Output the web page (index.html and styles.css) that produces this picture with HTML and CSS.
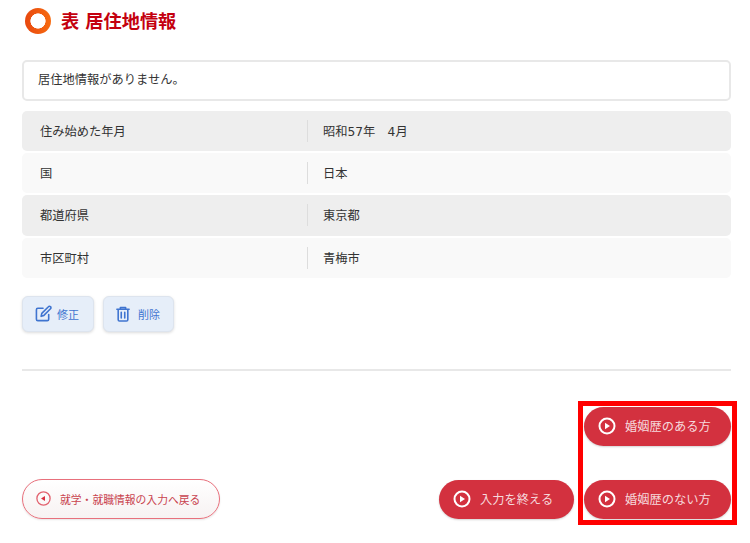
FILE: index.html
```html
<!DOCTYPE html>
<html lang="ja">
<head>
<meta charset="utf-8">
<title>居住地情報</title>
<link rel="stylesheet" href="styles.css">
</head>
<body>
<main class="page">
  <h1 class="title"><span class="ring"></span><span class="title-text">表 居住地情報</span></h1>
  <div class="notice">居住地情報がありません。</div>
  <div class="table">
    <div class="row dark"><div class="key">住み始めた年月</div><div class="val">昭和57年&emsp;4月</div></div>
    <div class="row light"><div class="key">国</div><div class="val">日本</div></div>
    <div class="row dark"><div class="key">都道府県</div><div class="val">東京都</div></div>
    <div class="row light"><div class="key">市区町村</div><div class="val">青梅市</div></div>
  </div>
  <div class="tools">
    <button class="tool edit"><svg width="17" height="17" viewBox="0 0 18 18" fill="none" stroke="#3f74d0" stroke-width="1.7" stroke-linecap="round" stroke-linejoin="round"><path d="M8.5 3.5H3a1.5 1.5 0 0 0-1.5 1.5v10A1.5 1.5 0 0 0 3 16.500h10a1.500 1.500 0 0 0 1.500-1.500V10"/><path d="M6.500 12l.7-3.200 7-7a1.500 1.500 0 0 1 2.200 0 1.500 1.500 0 0 1 0 2.200l-7 7z"/></svg>修正</button>
    <button class="tool del"><svg width="14" height="16" viewBox="0 0 16 18" fill="none" stroke="#3f74d0" stroke-width="1.8" stroke-linecap="round" stroke-linejoin="round"><path d="M1 3.500h14M5 3.500V1.500h6v2M2.500 3.500v12a1.500 1.500 0 0 0 1.500 1.500h8a1.500 1.500 0 0 0 1.500-1.500v-12M6 7v6.500M10 7v6.500"/></svg>削除</button>
  </div>
  <hr class="rule">
  <div class="nav">
    <button class="back"><svg width="15" height="15" viewBox="0 0 15 15"><circle cx="7.500" cy="7.500" r="6.600" fill="none" stroke="#e2626f" stroke-width="1.300"/><path d="M5 7.500l4-2.600v5.200z" fill="#d9303f"/></svg>就学・就職情報の入力へ戻る</button>
    <div class="forward">
      <button class="go wide"><svg class="play" width="18" height="18" viewBox="0 0 18 18"><circle cx="9" cy="9" r="7.500" fill="none" stroke="#fff" stroke-width="2"/><path d="M7 5.800l5 3.200-5 3.200z" fill="#fff"/></svg>婚姻歴のある方</button>
      <div class="last">
        <button class="go end"><svg class="play" width="18" height="18" viewBox="0 0 18 18"><circle cx="9" cy="9" r="7.500" fill="none" stroke="#fff" stroke-width="2"/><path d="M7 5.800l5 3.200-5 3.200z" fill="#fff"/></svg>入力を終える</button>
        <button class="go wide"><svg class="play" width="18" height="18" viewBox="0 0 18 18"><circle cx="9" cy="9" r="7.500" fill="none" stroke="#fff" stroke-width="2"/><path d="M7 5.800l5 3.200-5 3.200z" fill="#fff"/></svg>婚姻歴のない方</button>
      </div>
      <div class="mark"></div>
    </div>
  </div>
</main>
</body>
</html>
```
FILE: styles.css
```css
* { box-sizing: border-box; }
html, body { margin: 0; padding: 0; background: #fff; }
body { font-family: "Noto Sans CJK JP", "Noto Sans", sans-serif; color: #333; }
.page { width: 750px; height: 543px; padding: 8px 19px 0 22px; overflow: hidden; }
.title { display: flex; align-items: center; gap: 10px; margin: 0 0 0 3px; height: 26px; font-size: 18.2px; font-weight: 700; line-height: 26px; color: #c4000f; }
.title-text { padding-bottom: 2px; word-spacing: 2px; }
.ring { width: 26px; height: 26px; border-radius: 50%; background: radial-gradient(circle, #fff 7.3px, transparent 7.9px), linear-gradient(to right, #e8480f, #f76b10); }
.notice { margin-top: 26px; height: 41px; padding: 0 0 3px 14px; display: flex; align-items: center; border: 2px solid #e8e8e8; border-radius: 5px; font-size: 12.25px; background: #fff; }
.table { margin-top: 10px; display: flex; flex-direction: column; gap: 2px; }
.row { display: flex; align-items: center; height: 40.2px; border-radius: 5px; font-size: 12.25px; }
.dark { background: #eeeeee; }
.light { background: #f9f9f9; }
.key { width: 286px; height: 22px; line-height: 22px; padding-left: 18px; border-right: 1px solid #dddddd; }
.val { height: 22px; padding: 1px 0 0 15px; line-height: 22px; font-family: "DejaVu Sans", "Noto Sans CJK JP", sans-serif; }
.tools { display: flex; gap: 9px; margin-top: 18.2px; }
.tool { display: flex; align-items: center; height: 36px; padding: 0 0 0 12px; gap: 5px; border: 1px solid #dde4ee; border-radius: 6px; background: #e6eef9; box-shadow: 0 1px 3px rgba(0,0,0,.14); color: #3f74d0; font: 11px "Noto Sans CJK JP", sans-serif; }
.edit { width: 72px; }
.del { width: 71px; gap: 8px; }
.rule { margin: 37px 0 0; border: 0; height: 2px; background: #e8e8e8; }
.nav { display: flex; justify-content: space-between; align-items: flex-end; margin-top: 36px; }
.back { display: flex; align-items: center; gap: 9px; width: 198px; height: 40px; padding: 0 0 0 13px; border: 1.5px solid #e8707c; border-radius: 20px; background: linear-gradient(#fff, #f7f2f2); box-shadow: 0 1px 2px rgba(0,0,0,.1); color: #c9434f; font: 10.8px "Noto Sans CJK JP", sans-serif; }
.forward { position: relative; display: flex; flex-direction: column; align-items: flex-end; gap: 34px; }
.last { display: flex; gap: 10px; }
.go { display: flex; align-items: center; gap: 9px; height: 39px; padding: 0 0 0 14px; border: 0; border-radius: 20px; background: #d3313f; box-shadow: 0 1px 2px rgba(0,0,0,.18); color: #f6d9dc; font: 12.25px "Noto Sans CJK JP", sans-serif; }
.wide { width: 147px; }
.end { width: 135px; }
.play { flex: none; }
.mark { position: absolute; top: -6px; right: -6px; width: 159px; height: 124px; border: 5px solid #ff0000; }
```
